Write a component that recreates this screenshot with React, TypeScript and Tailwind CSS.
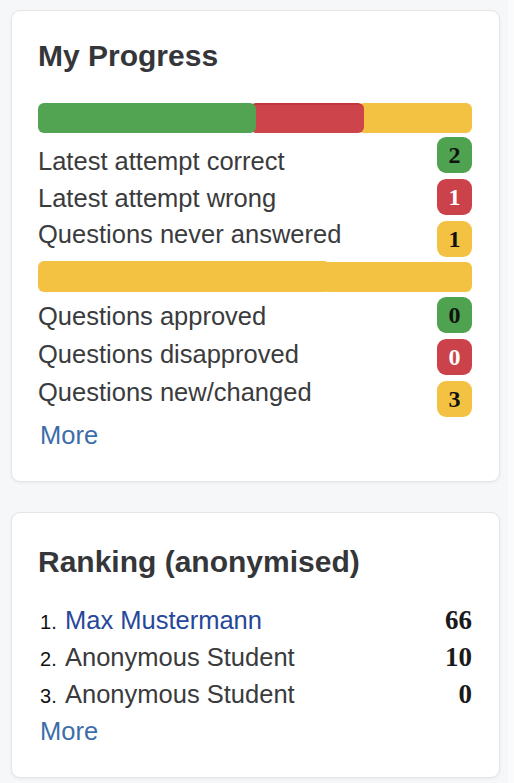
import React from 'react'

const sans = { fontFamily: '"Liberation Sans", Arial, sans-serif' }
const serif = { fontFamily: '"Liberation Serif", "Times New Roman", serif' }

type Stat = { label: string; value: number; tone: 'green' | 'red' | 'yellow' }

const badgeTone = {
  green: 'bg-[#4fa24f] text-[#111]',
  red: 'bg-[#cc424a] text-white',
  yellow: 'bg-[#f4c243] text-[#111]',
}

const attempts: Stat[] = [
  { label: 'Latest attempt correct', value: 2, tone: 'green' },
  { label: 'Latest attempt wrong', value: 1, tone: 'red' },
  { label: 'Questions never answered', value: 1, tone: 'yellow' },
]

const reviews: Stat[] = [
  { label: 'Questions approved', value: 0, tone: 'green' },
  { label: 'Questions disapproved', value: 0, tone: 'red' },
  { label: 'Questions new/changed', value: 3, tone: 'yellow' },
]

const ranking = [
  { pos: 1, name: 'Max Mustermann', score: 66, me: true },
  { pos: 2, name: 'Anonymous Student', score: 10, me: false },
  { pos: 3, name: 'Anonymous Student', score: 0, me: false },
]

function Badge({ value, tone }: { value: number; tone: Stat['tone'] }) {
  return (
    <span
      className={`flex h-[36px] w-[35px] items-center justify-center rounded-[9px] text-[24px] font-bold ${badgeTone[tone]}`}
      style={serif}
    >
      {value}
    </span>
  )
}

// labels and badges flow in two columns, the badges run a bit taller than the text lines
function StatList({ items, lineClass, topGap }: { items: Stat[]; lineClass: string; topGap: string }) {
  return (
    <div className="flex items-start justify-between">
      <div className={`flex flex-col ${topGap}`}>
        {items.map((s) => (
          <p key={s.label} className={`text-[25.5px] text-[#3a3b3d] ${lineClass}`}>
            {s.label}
          </p>
        ))}
      </div>
      <div className="flex flex-col gap-[6px]">
        {items.map((s) => (
          <Badge key={s.label} value={s.value} tone={s.tone} />
        ))}
      </div>
    </div>
  )
}

function Card({ children, className = '' }: { children: React.ReactNode; className?: string }) {
  return (
    <div className={`rounded-[9px] border border-[#e4e5e7] bg-white pl-[26px] pr-[27px] shadow-[0_1px_3px_rgba(0,0,0,0.06)] ${className}`}>
      {children}
    </div>
  )
}

export default function App() {
  return (
    <div className="flex min-h-[783px] w-[514px]" style={sans}>
      <div className="flex w-[508px] flex-col gap-[30px] bg-[#f6f7f9] pl-[11px] pr-[8px] pt-[10px]">
        <Card className="pt-[28px] pb-[27px]">
          <h2 className="text-[30px] font-bold leading-[34px] text-[#343639]">My Progress</h2>

          <div className="mt-[30px] flex h-[30px]">
            <div className="relative z-20 w-[218px] rounded-[6px] bg-[#52a352]" />
            <div className="relative z-10 -ml-[6px] w-[114px] rounded-[6px] border-t-2 border-[#c4353d] bg-[#cd444b]" />
            <div className="-ml-[6px] flex-1 rounded-[6px] bg-[#f4c243]" />
          </div>

          <div className="mt-[4px]">
            <StatList items={attempts} lineClass="leading-[36.5px]" topGap="pt-[6px]" />
          </div>

          <div className="mt-[4px] flex h-[31px]">
            <div className="relative z-10 w-[292px] rounded-[6px] bg-[#f4c243]" />
            <div className="-ml-[8px] mt-[1px] flex-1 rounded-[6px] bg-[#f4c243]" />
          </div>

          <div className="mt-[5px]">
            <StatList items={reviews} lineClass="leading-[38px]" topGap="" />
          </div>

          <a className="block pl-[2px] text-[25.5px] leading-[36.5px] text-[#3c6da8]">More</a>
        </Card>

        <Card className="pt-[32px] pb-[27px]">
          <h2 className="text-[30px] font-bold leading-[34px] text-[#343639]">Ranking (anonymised)</h2>
          <ol className="mt-[23px] flex flex-col">
            {ranking.map((r) => (
              <li key={r.pos} className="flex h-[37px] items-baseline leading-[37px]">
                <span className="w-[27px] pl-[2px] text-[20px] leading-[37px] text-[#111]">{r.pos}.</span>
                <span className={`text-[25.5px] leading-[37px] ${r.me ? 'text-[#27479a]' : 'text-[#3a3b3d]'}`}>{r.name}</span>
                <span className="ml-auto text-[27px] font-bold leading-[37px] text-[#1a1a1a]" style={serif}>
                  {r.score}
                </span>
              </li>
            ))}
          </ol>
          <a className="block pl-[2px] text-[25.5px] leading-[37px] text-[#3c6da8]">More</a>
        </Card>
      </div>
      <div className="flex-1 bg-[#fbfbfc]" />
    </div>
  )
}
